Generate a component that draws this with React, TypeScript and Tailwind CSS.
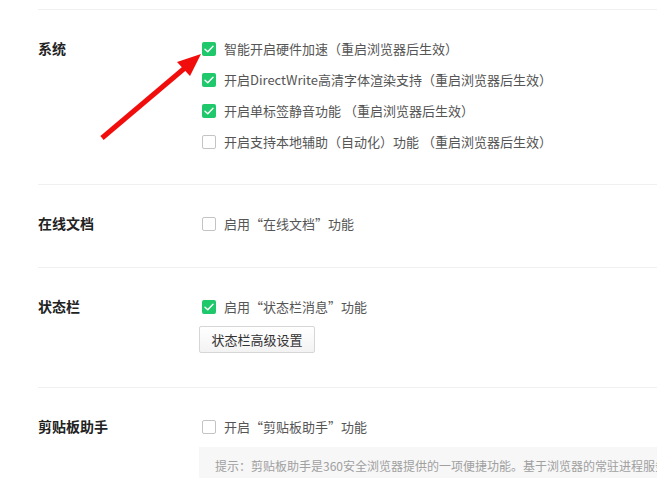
import React from "react"

const font = { fontFamily: '"Noto Sans CJK SC", "Microsoft YaHei", sans-serif' }

function Checkbox({ checked }: { checked: boolean }) {
  if (checked) {
    return (
      <span className="flex h-[14px] w-[14px] shrink-0 items-center justify-center rounded-[2px] bg-[#1fc86a]">
        <svg width="10" height="8" viewBox="0 0 10 8" fill="none">
          <path d="M1 4.2 L3.8 6.8 L9 1.2" stroke="white" strokeWidth="1.4" strokeLinecap="round" strokeLinejoin="round" />
        </svg>
      </span>
    )
  }
  return <span className="h-[14px] w-[14px] shrink-0 rounded-[2px] border border-[#c4c4c4] bg-white" />
}

function Option({ checked, label }: { checked: boolean; label: string }) {
  return (
    <div className="flex h-[31px] items-center gap-[8px]">
      <Checkbox checked={checked} />
      <span className="text-[13px] text-[#555]">{label}</span>
    </div>
  )
}

function Section({ title, children, pb }: { title: string; children: React.ReactNode; pb: string }) {
  return (
    <div className={`flex border-t border-[#f0f0f0] pt-[23px] ${pb}`}>
      <div className="flex h-[31px] w-[164px] shrink-0 items-center text-[14px] font-bold text-[#222]">{title}</div>
      <div className="flex min-w-0 flex-1 flex-col">{children}</div>
    </div>
  )
}

export default function App() {
  return (
    <div className="relative h-[478px] w-[657px] overflow-hidden bg-white" style={font}>
      <div className="pl-[38px] pt-[9px]">
        <Section title="系统" pb="pb-[27px]">
          <Option checked label="智能开启硬件加速（重启浏览器后生效）" />
          <Option checked label="开启DirectWrite高清字体渲染支持（重启浏览器后生效）" />
          <Option checked label="开启单标签静音功能 （重启浏览器后生效）" />
          <Option checked={false} label="开启支持本地辅助（自动化）功能 （重启浏览器后生效）" />
        </Section>
        <Section title="在线文档" pb="pb-[28px]">
          <Option checked={false} label="启用“在线文档”功能" />
        </Section>
        <Section title="状态栏" pb="pb-[34px]">
          <Option checked label="启用“状态栏消息”功能" />
          <div className="mt-[4px]">
            <button className="-ml-[3px] h-[27px] w-[116px] rounded-[2px] border border-[#d6d6d6] bg-gradient-to-b from-white to-[#f3f3f3] text-[13px] text-[#333]">
              状态栏高级设置
            </button>
          </div>
        </Section>
        <Section title="剪贴板助手" pb="pb-0">
          <Option checked={false} label="开启“剪贴板助手”功能" />
          <div className="-ml-[3px] mt-[5px] h-[60px] overflow-hidden whitespace-nowrap bg-[#f7f7f7] pl-[16px] pt-[10px] text-[12px] text-[#a0a0a0]">
            提示：剪贴板助手是360安全浏览器提供的一项便捷功能。基于浏览器的常驻进程服务
          </div>
        </Section>
      </div>
      <svg className="pointer-events-none absolute left-0 top-0" width="657" height="478">
        <line x1="102" y1="138" x2="186" y2="67" stroke="#f20d0d" strokeWidth="5" strokeLinecap="butt" />
        <polygon points="201,54 177,62 190,76" fill="#f20d0d" />
      </svg>
    </div>
  )
}
